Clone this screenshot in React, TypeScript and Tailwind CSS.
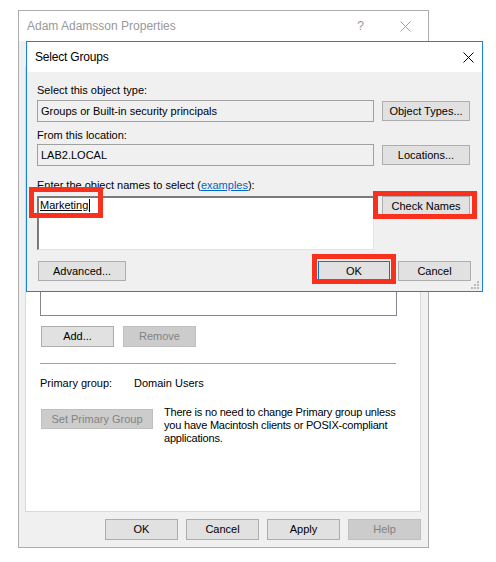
import React from "react";

type BtnProps = {
  children: React.ReactNode;
  className?: string;
  disabled?: boolean;
  focused?: boolean;
};

const Btn = ({ children, className = "", disabled, focused }: BtnProps) => {
  const look = disabled
    ? "bg-[#cccccc] border-[#bfbfbf] text-[#838383]"
    : focused
    ? "bg-[#e1e1e1] border-[#0078d7] text-black"
    : "bg-[#e1e1e1] border-[#adadad] text-black";
  return (
    <div
      className={`flex items-center justify-center border text-[11px] leading-[13px] shrink-0 ${look} ${className}`}
    >
      {children}
    </div>
  );
};

const CloseIcon = ({ color }: { color: string }) => (
  <svg width="11" height="11" viewBox="0 0 11 11">
    <path d="M0.5 0.5 L10.5 10.5 M10.5 0.5 L0.5 10.5" stroke={color} strokeWidth="1" />
  </svg>
);

const RedBox = ({ className }: { className: string }) => (
  <div className={`absolute border-[5px] border-[#f8311f] ${className}`} />
);

const SelectGroups = () => {
  return (
    <div className="absolute left-[7px] top-[30px] w-[457px] h-[251px] border border-[#1883d7] bg-[#f0f0f0] flex flex-col">
      {/* title bar */}
      <div className="h-[30px] bg-white flex items-center justify-between pl-[8px] pr-[8px] shrink-0">
        <span className="text-[12px] text-black tracking-[-0.2px]">Select Groups</span>
        <CloseIcon color="#000" />
      </div>

      <div className="flex flex-col pt-[12px] pl-[10px] pr-[11px] text-[11px] leading-[13px] text-black">
        <div>Select this object type:</div>
        <div className="mt-[3px] flex items-center gap-[8px]">
          <div className="w-[337px] h-[22px] border border-[#a0a0a0] bg-[#f0f0f0] flex items-center pl-[3px]">
            Groups or Built-in security principals
          </div>
          <Btn className="w-[88px] h-[20px]">Object Types...</Btn>
        </div>

        <div className="mt-[7px]">From this location:</div>
        <div className="mt-[2px] flex items-center gap-[8px]">
          <div className="w-[337px] h-[22px] border border-[#a0a0a0] bg-[#f0f0f0] flex items-center pl-[3px]">
            LAB2.LOCAL
          </div>
          <Btn className="w-[88px] h-[20px]">Locations...</Btn>
        </div>

        <div className="mt-[13px]">
          Enter the object names to select (
          <span className="text-[#0066cc] underline">examples</span>):
        </div>
        <div className="mt-[4px] flex items-start gap-[8px]">
          <div className="w-[337px] h-[54px] bg-white border-t-2 border-l-2 border-r border-b border-t-[#7a7a7a] border-l-[#7a7a7a] border-r-[#e3e3e3] border-b-[#e3e3e3] pl-[1px] pt-[1px]">
            <span className="underline">Marketing</span>
            <span className="inline-block w-px h-[13px] bg-black align-top ml-[1px]" />
          </div>
          <Btn className="w-[88px] h-[20px]">Check Names</Btn>
        </div>

        <div className="mt-[11px] flex items-center">
          <Btn className="w-[88px] h-[20px] ml-[1px]">Advanced...</Btn>
          <div className="flex-1" />
          <Btn className="w-[72px] h-[20px]" focused>
            OK
          </Btn>
          <Btn className="w-[73px] h-[20px] ml-[8px]">Cancel</Btn>
        </div>
      </div>

      {/* resize grip */}
      <svg className="absolute right-[3px] bottom-[2px]" width="8" height="8" viewBox="0 0 8 8">
        <g fill="#bcbcbc">
          <rect x="6" y="0" width="2" height="2" />
          <rect x="3" y="3" width="2" height="2" />
          <rect x="6" y="3" width="2" height="2" />
          <rect x="0" y="6" width="2" height="2" />
          <rect x="3" y="6" width="2" height="2" />
          <rect x="6" y="6" width="2" height="2" />
        </g>
      </svg>

      {/* annotation boxes */}
      <RedBox className="left-[2px] top-[145px] w-[74px] h-[31px]" />
      <RedBox className="left-[346px] top-[149px] w-[104px] h-[28px]" />
      <RedBox className="left-[285px] top-[212px] w-[84px] h-[30px]" />
    </div>
  );
};

export default function App() {
  return (
    <div className="w-[496px] h-[562px] bg-white pl-[18px] pt-[10px] font-['Liberation_Sans',Arial,sans-serif]">
      <div className="relative w-[411px] h-[538px] border border-[#acacac] flex flex-col">
        {/* properties window title */}
        <div className="h-[30px] bg-white flex items-center pl-[8px] shrink-0">
          <span className="text-[12px] text-[#999999]">Adam Adamsson Properties</span>
          <div className="flex-1" />
          <span className="text-[12px] text-[#999999] mr-[36px]">?</span>
          <div className="mr-[17px] flex">
            <CloseIcon color="#a0a0a0" />
          </div>
        </div>

        <div className="flex-1 bg-[#f0f0f0] flex flex-col pl-[6px] pr-[7px] pt-[25px] pb-[7px]">
          <div className="flex-1 bg-white border border-[#d9d9d9] pl-[14px] pt-[20px] text-[11px] leading-[13px] text-black">
            <div className="w-[357px] h-[229px] border border-[#828790] bg-white" />

            <div className="mt-[10px] flex gap-[9px] ml-[1px]">
              <Btn className="w-[73px] h-[21px]">Add...</Btn>
              <Btn className="w-[73px] h-[21px]" disabled>
                Remove
              </Btn>
            </div>

            <div className="mt-[16px] w-[356px] h-px bg-[#a0a0a0]" />

            <div className="mt-[13px] flex">
              <div className="w-[94px]">Primary group:</div>
              <div>Domain Users</div>
            </div>

            <div className="mt-[16px] flex items-start">
              <Btn className="w-[112px] h-[20px] mt-[3px] ml-[1px]" disabled>
                Set Primary Group
              </Btn>
              <div className="ml-[11px] whitespace-nowrap tracking-[-0.2px]">
                There is no need to change Primary group unless
                <br />
                you have Macintosh clients or POSIX-compliant
                <br />
                applications.
              </div>
            </div>
          </div>

          <div className="mt-[7px] flex justify-end gap-[8px]">
            <Btn className="w-[73px] h-[21px]">OK</Btn>
            <Btn className="w-[73px] h-[21px]">Cancel</Btn>
            <Btn className="w-[73px] h-[21px]">Apply</Btn>
            <Btn className="w-[73px] h-[21px]" disabled>
              Help
            </Btn>
          </div>
        </div>

        <SelectGroups />
      </div>
    </div>
  );
}
